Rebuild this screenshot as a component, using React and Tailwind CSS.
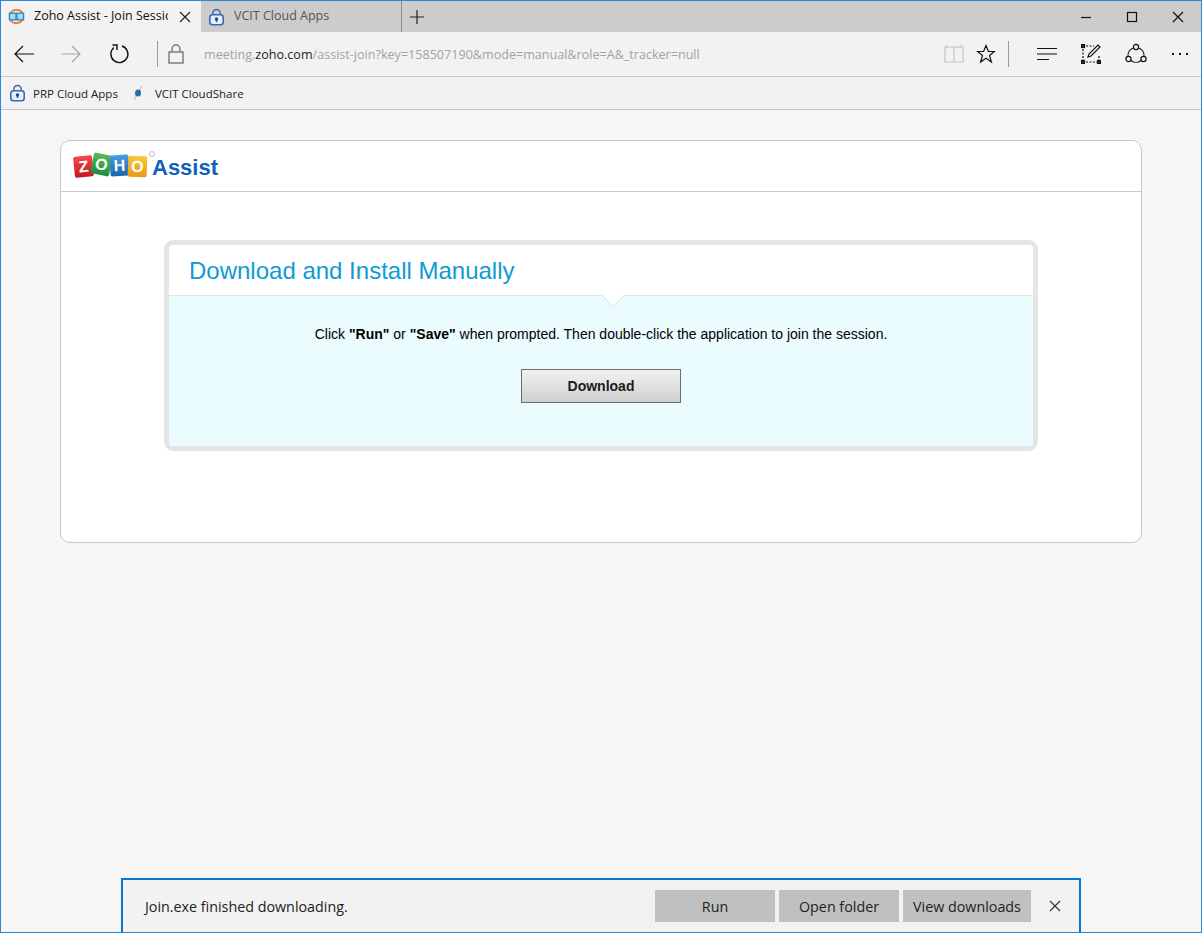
const ui = { fontFamily: '"Open Sans", "Noto Sans", sans-serif' };

function TabLock() {
  return (
    <svg width="17" height="18" viewBox="0 0 17 18" className="shrink-0">
      <path d="M4.8 8V5.2a3.7 3.7 0 0 1 7.4 0V8" fill="none" stroke="#3f66b5" strokeWidth="1.5" />
      <rect x="1" y="6" width="15" height="11.5" rx="3.5" fill="#3f66b5" />
      <rect x="2.6" y="7.6" width="11.8" height="8.3" rx="2" fill="#e6eefb" />
      <circle cx="8.5" cy="11" r="1.7" fill="#27458c" />
      <rect x="7.8" y="11" width="1.4" height="3" fill="#27458c" />
    </svg>
  );
}

function ZohoTabIcon() {
  return (
    <svg width="17" height="17" viewBox="0 0 18 18" className="shrink-0">
      <path d="M2.5 5.5a8 8 0 0 1 13-.5" fill="none" stroke="#ef7a2b" strokeWidth="1.8" />
      <path d="M15.5 12.5a8 8 0 0 1-13 .5" fill="none" stroke="#ef7a2b" strokeWidth="1.8" />
      <rect x="1.5" y="5.5" width="7" height="7" fill="#a8dcf5" stroke="#2a86c8" strokeWidth="1.4" />
      <rect x="9.5" y="5.5" width="7" height="7" fill="#a8dcf5" stroke="#2a86c8" strokeWidth="1.4" />
    </svg>
  );
}

function Glyph({ children, w = 24, h = 24, stroke = "#111", className = "" }) {
  return (
    <svg width={w} height={h} viewBox={`0 0 ${w} ${h}`} fill="none" stroke={stroke} strokeWidth="1.2" className={`shrink-0 ${className}`}>
      {children}
    </svg>
  );
}

function ZohoLetter({ letter, className }) {
  return (
    <div className={`w-[19px] h-[21px] flex items-center justify-center rounded-[2px] text-white font-bold text-[16px] leading-none -mr-[1px] ${className}`}>
      {letter}
    </div>
  );
}

export default function App() {
  return (
    <div className="w-[1202px] h-[933px] flex flex-col overflow-hidden border border-[#2b88d8] bg-[#f6f6f6]" style={ui}>
      {/* tab strip */}
      <div className="h-[31px] shrink-0 bg-[#cccccc] flex items-center">
        <div className="w-[200px] h-[31px] flex items-center pl-[7px] bg-[#f2f2f2] text-[#111]">
          <ZohoTabIcon />
          <span className="ml-[9px] w-[134px] text-[12.5px] whitespace-nowrap overflow-hidden">Zoho Assist - Join Session</span>
          <Glyph w={12} h={12} stroke="#222" className="ml-[11px]">
            <path d="M1 1l10 10M11 1L1 11" />
          </Glyph>
        </div>
        <div className="w-[201px] h-[31px] flex items-center pl-[7px] border-r border-[#8c8c8c] text-[#555]">
          <TabLock />
          <span className="ml-[9px] text-[12.5px] whitespace-nowrap">VCIT Cloud Apps</span>
        </div>
        <Glyph w={14} h={14} stroke="#222" className="ml-[8px]">
          <path d="M7 0v14M0 7h14" />
        </Glyph>
        <div className="ml-auto flex items-center text-[#111]">
          <Glyph w={12} h={12} className="mr-[34px]"><path d="M1 6.5h10" /></Glyph>
          <Glyph w={12} h={12} className="mr-[34px]"><rect x="1.5" y="1.5" width="9" height="9" /></Glyph>
          <Glyph w={12} h={12} className="mr-[17px]"><path d="M1 1l10 10M11 1L1 11" /></Glyph>
        </div>
      </div>

      {/* toolbar */}
      <div className="h-[45px] shrink-0 bg-[#f2f2f2] border-b border-[#c8c8c8] flex items-center">
        <Glyph className="ml-[11px]" stroke="#111"><path d="M3 12h19M11 4l-8 8 8 8" /></Glyph>
        <Glyph className="ml-[23px]" stroke="#a8a8a8"><path d="M2 12h19M13 4l8 8-8 8" /></Glyph>
        <Glyph className="ml-[24px]" stroke="#111">
          <path d="M15 4a8.5 8.5 0 1 1-8 1.5" strokeWidth="1.4" />
          <path d="M5.5 3H10V8" strokeWidth="1.4" />
        </Glyph>
        <div className="ml-[26px] w-px h-[26px] bg-[#9a9a9a]" />
        <Glyph w={16} h={20} stroke="#777" className="ml-[10px]">
          <rect x="1" y="8" width="14" height="11" strokeWidth="1.4" />
          <path d="M4 8V5a4 4 0 0 1 8 0v3" strokeWidth="1.4" />
        </Glyph>
        <div className="ml-[20px] mt-[2px] text-[12.58px] text-[#a3a3a3] whitespace-nowrap">
          meeting.<span className="text-[#222]">zoho.com</span>/assist-join?key=158507190&amp;mode=manual&amp;role=A&amp;_tracker=null
        </div>
        <div className="ml-auto flex items-center">
          <Glyph w={20} h={20} stroke="#c4c4c4">
            <path d="M1 3h8l1 1 1-1h8v15H1zM10 4v14M3 1v2M17 1v2" />
          </Glyph>
          <Glyph w={20} h={20} stroke="#111" className="ml-[12px]">
            <path d="M10 1.5l2.4 6h6.1l-5 4 1.9 6.5-5.4-3.8L4.6 18l1.9-6.5-5-4h6.1z" />
          </Glyph>
          <div className="ml-[12px] w-px h-[26px] bg-[#9a9a9a]" />
          <Glyph w={20} h={14} stroke="#111" className="ml-[28px]">
            <path d="M0 1.5h20M0 7h20M0 12.5h12" />
          </Glyph>
          <Glyph w={20} h={20} stroke="#111" className="ml-[24px]">
            <path d="M5 2h8M2 5v11M5 18h11M18 12v4" strokeDasharray="2 1.5" />
            <path d="M7 13l1-3 9-9 2 2-9 9z" />
            <rect x="0.5" y="0.5" width="3" height="3" fill="#333" />
            <rect x="0.5" y="16.5" width="3" height="3" fill="#333" />
            <rect x="16.5" y="16.5" width="3" height="3" fill="#333" />
          </Glyph>
          <Glyph w={22} h={22} stroke="#111" className="ml-[24px]">
            <circle cx="11" cy="4" r="2.6" />
            <circle cx="3.5" cy="16" r="2.6" />
            <circle cx="18.5" cy="16" r="2.6" />
            <path d="M8.6 5A8 8 0 0 0 3 13.4M13.4 5A8 8 0 0 1 19 13.4M6 17.5a8 8 0 0 0 10 0" />
          </Glyph>
          <div className="ml-[25px] mr-[13px] flex gap-[5px]">
            <span className="w-[2px] h-[2px] bg-[#111]" />
            <span className="w-[2px] h-[2px] bg-[#111]" />
            <span className="w-[2px] h-[2px] bg-[#111]" />
          </div>
        </div>
      </div>

      {/* favorites bar */}
      <div className="h-[33px] shrink-0 bg-[#f2f2f2] border-b border-[#c8c8c8] flex items-center pl-[8px] text-[11.5px] text-[#222]">
        <TabLock />
        <span className="ml-[7px] mt-[2px]">PRP Cloud Apps</span>
        <svg width="12" height="16" viewBox="0 0 12 16" className="ml-[14px]">
          <path d="M2 15L10 1" stroke="#eeb0a0" strokeWidth="1.2" />
          <ellipse cx="6" cy="8" rx="3" ry="3.6" fill="#2a6cb0" />
        </svg>
        <span className="ml-[11px] mt-[2px]">VCIT CloudShare</span>
      </div>

      {/* page */}
      <div className="flex-1 min-h-0 flex flex-col items-center" style={{ fontFamily: '"Liberation Sans", Arial, sans-serif' }}>
        <div className="mt-[30px] w-[1082px] h-[403px] shrink-0 bg-white border border-[#c8c8c8] rounded-[10px]">
          <div className="h-[51px] border-b border-[#c8c8c8] flex items-center pl-[13px]">
            <div className="relative flex items-center">
              <ZohoLetter letter="Z" className="bg-gradient-to-b from-[#f0484c] to-[#c8141e] -rotate-6 mt-[1px]" />
              <ZohoLetter letter="O" className="bg-gradient-to-b from-[#58b85a] to-[#1f8c3c] rotate-12 -mt-[4px]" />
              <ZohoLetter letter="H" className="bg-gradient-to-b from-[#4a9ee0] to-[#1a66b0] -rotate-3 -mt-[1px]" />
              <ZohoLetter letter="O" className="bg-gradient-to-b from-[#fbc83c] to-[#ea9a10] rotate-2 mt-[1px]" />
              <span className="absolute -top-[3px] left-[75px] w-[6px] h-[6px] rounded-full border border-[#c0c0c0]" />
              <span className="ml-[6px] mt-[3px] text-[22px] leading-none font-bold text-[#0f62b8]">Assist</span>
            </div>
          </div>

          <div className="mt-[48px] mx-auto w-[874px] h-[211px] border-[5px] border-[#e5e5e5] rounded-[9px] overflow-hidden">
            <div className="relative h-[51px] bg-white border-b border-[#dde6e8] pl-[20px] pt-[2px] flex items-center">
              <h1 className="text-[24px] leading-none text-[#0e9bd3]">Download and Install Manually</h1>
              <span className="absolute left-[436px] -bottom-[9px] w-[16px] h-[16px] rotate-45 bg-white border-r border-b border-[#dde6e8]" />
            </div>
            <div className="h-[150px] bg-[#ebfcff] flex flex-col items-center text-[14px] text-black">
              <p className="mt-[29px] leading-[18px]">
                Click <b>"Run"</b> or <b>"Save"</b> when prompted. Then double-click the application to join the session.
              </p>
              <button className="mt-[26px] w-[160px] h-[34px] border border-[#6e6e6e] bg-gradient-to-b from-[#f2f2f2] to-[#cfcfcf] text-[14px] font-bold text-[#1c1c1c]">
                Download
              </button>
            </div>
          </div>
        </div>

        {/* download notification */}
        <div className="mt-auto w-[960px] h-[54px] shrink-0 bg-[#f2f2f2] border-2 border-b-0 border-[#0078d7] flex items-center pl-[22px] text-[14.3px] text-[#222]" style={ui}>
          <span className="mt-[2px]">Join.exe finished downloading.</span>
          <div className="ml-auto flex gap-[4px]">
            <button className="w-[120px] h-[32px] pt-[2px] bg-[#c0c0c0]">Run</button>
            <button className="w-[120px] h-[32px] pt-[2px] bg-[#c0c0c0]">Open folder</button>
            <button className="w-[128px] h-[32px] pt-[2px] bg-[#c0c0c0]">View downloads</button>
          </div>
          <Glyph w={12} h={12} stroke="#333" className="ml-[18px] mr-[18px]">
            <path d="M1 1l10 10M11 1L1 11" />
          </Glyph>
        </div>
      </div>
    </div>
  );
}
